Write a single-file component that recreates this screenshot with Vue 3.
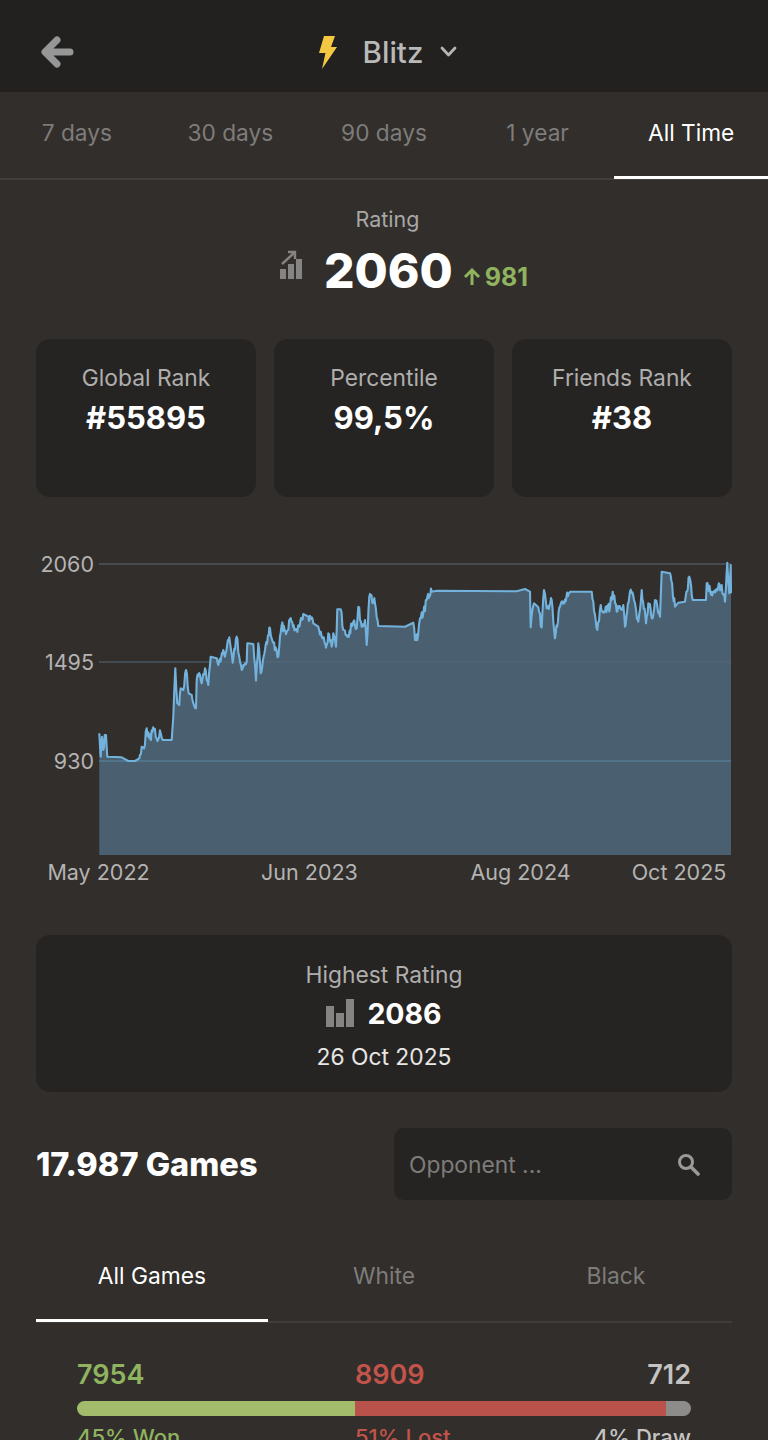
<script setup>
const tabs = ['7 days', '30 days', '90 days', '1 year', 'All Time']
const cards = [
  { label: 'Global Rank', value: '#55895' },
  { label: 'Percentile', value: '99,5%' },
  { label: 'Friends Rank', value: '#38' },
]
const left = [28,550,32,620,36,560,40,600,44,555,48,555,52,620,95,622,115,633,135,633,148,625,155,590,162,595,170,535,178,565,192,540,200,565,212,550,218,570,245,570,250,500,256,355,262,460,268,465,272,415,280,420,288,360,296,430,305,435,318,475,320,390,330,375,335,400,345,355,355,405,362,320,380,325,385,345,400,300,405,320,418,262,428,338,440,260,450,335,458,355,470,335,472,280,490,282,498,392,505,280,512,370,525,300,540,235,548,275,565,320,575,225,590,245,600,208,620,240,640,192,655,200,670,220,685,230,695,260,710,285,715,250,725,290,730,250,738,290,742,178,752,178,760,240,772,260,790,215,800,235,805,170,815,230,825,210,830,285,838,140,855,160,865,228,945,230,970,218,975,270,985,255]
const right = [15,270,22,270,30,205,40,190,50,150,65,125,80,122,320,124,345,117,360,125,362,232,372,160,385,172,395,232,402,120,410,175,425,150,435,265,450,170,480,125,545,125,550,155,562,240,572,165,585,185,600,170,608,125,620,185,640,165,645,230,660,125,672,150,685,215,695,120,708,220,715,160,728,205,735,150,750,200,755,65,780,70,795,170,805,158,825,155,838,80,848,150,888,150,890,100,905,125,935,105,945,155,952,38,958,130,962,45,963,130]
const raw = []
for (let i = 0; i < left.length; i += 2) raw.push([90 + left[i] / 3, 550 + left[i + 1] / 3])
for (let i = 0; i < right.length; i += 2) raw.push([410 + right[i] / 3, 550 + right[i + 1] / 3])

const pts = []
let seed = 7
const noise = () => {
  seed = (seed * 1103515245 + 12345) % 2147483648
  return seed / 2147483648 - 0.5
}
raw.forEach((p, i) => {
  pts.push(p)
  const n = raw[i + 1]
  if (!n) return
  const dx = n[0] - p[0]
  const dy = n[1] - p[1]
  if (Math.abs(dy) < 5 || dx < 0.8) return
  const steps = Math.max(2, Math.floor(dx / 0.7))
  for (let s = 1; s < steps; s++) {
    const t = s / steps
    pts.push([p[0] + dx * t, p[1] + dy * t + noise() * 9])
  }
})
const line = pts.map((p, i) => (i ? 'L' : 'M') + p[0].toFixed(1) + ' ' + p[1].toFixed(1)).join(' ')
const area = line + ' L731 855 L99.3 855 Z'
const yLabels = [{ t: '2060', y: 564 }, { t: '1495', y: 662 }, { t: '930', y: 761 }]
const xLabels = [{ t: 'May 2022', x: 98.5 }, { t: 'Jun 2023', x: 309.5 }, { t: 'Aug 2024', x: 520.5 }, { t: 'Oct 2025', x: 679 }]
const gameTabs = ['All Games', 'White', 'Black']
</script>

<template>
  <div class="page">
    <header class="top">
      <svg class="back" viewBox="0 0 34 34" width="34" height="34">
        <path d="M17 5 L5 17 L17 29 M7 17 H30" fill="none" stroke="#979797" stroke-width="7" stroke-linecap="round" stroke-linejoin="round" />
      </svg>
      <div class="title">
        <svg viewBox="0 0 22 34" width="22" height="34">
          <path d="M8 1 H19 L15 12 H21 L6 34 L9.5 18 H3 Z" fill="#f5c843" />
        </svg>
        <span class="title-text">Blitz</span>
        <svg viewBox="0 0 17 11" width="17" height="11">
          <path d="M2 2 L8.5 9 L15 2" fill="none" stroke="#b5b5b4" stroke-width="2.8" stroke-linecap="round" stroke-linejoin="round" />
        </svg>
      </div>
    </header>

    <nav class="tabs">
      <div v-for="(t, i) in tabs" :key="t" class="tab" :class="{ on: i === 4 }">{{ t }}</div>
    </nav>

    <section class="rating">
      <div class="rating-label">Rating</div>
      <div class="rating-row">
        <svg viewBox="0 0 24 30" width="24" height="30" class="rating-icon">
          <rect x="1" y="19" width="6" height="10" fill="#858483" />
          <rect x="9" y="14" width="6" height="15" fill="#858483" />
          <rect x="17" y="9" width="6" height="20" fill="#858483" />
          <path d="M3 14 L15 3 M9 2 H16 V9" fill="none" stroke="#858483" stroke-width="2.4" />
        </svg>
        <span class="rating-value">2060</span>
        <svg viewBox="0 0 18 18" width="18" height="18" class="delta-arrow">
          <path d="M9 17 V2 M2 9 L9 2 L16 9" fill="none" stroke="#8fb35f" stroke-width="3" />
        </svg>
        <span class="delta">981</span>
      </div>
    </section>

    <section class="cards">
      <div v-for="c in cards" :key="c.label" class="card">
        <div class="card-label">{{ c.label }}</div>
        <div class="card-value">{{ c.value }}</div>
      </div>
    </section>

    <svg class="chart" viewBox="0 540 768 350" width="768" height="350">
      <path :d="area" fill="#4a5f6f" />
      <line x1="99" x2="731" y1="564" y2="564" stroke="#4e5860" stroke-width="1.5" />
      <line x1="99" x2="731" y1="662" y2="662" stroke="#56697a" stroke-width="1.2" />
      <line x1="99" x2="731" y1="761" y2="761" stroke="#5a8aa6" stroke-width="1.2" />
      <path :d="line" fill="none" stroke="#72b2dc" stroke-width="2.1" stroke-linejoin="round" />
      <text v-for="l in yLabels" :key="l.t" x="94" :y="l.y + 8" text-anchor="end" class="axis">{{ l.t }}</text>
      <text v-for="l in xLabels" :key="l.t" :x="l.x" y="880" text-anchor="middle" class="axis">{{ l.t }}</text>
    </svg>

    <section class="highest">
      <div class="highest-label">Highest Rating</div>
      <div class="highest-row">
        <svg viewBox="0 0 28 28" width="28" height="28">
          <rect x="0" y="7" width="8" height="21" fill="#858483" />
          <rect x="10" y="14" width="8" height="14" fill="#858483" />
          <rect x="20" y="0" width="8" height="28" fill="#858483" />
        </svg>
        <span class="highest-value">2086</span>
      </div>
      <div class="highest-date">26 Oct 2025</div>
    </section>

    <section class="games">
      <div class="games-title">17.987 Games</div>
      <div class="search">
        <span class="search-text">Opponent ...</span>
        <svg viewBox="0 0 24 24" width="24" height="24">
          <circle cx="10" cy="10" r="6.5" fill="none" stroke="#9a9998" stroke-width="3" />
          <path d="M15 15 L22 22" stroke="#9a9998" stroke-width="3.6" stroke-linecap="round" />
        </svg>
      </div>
    </section>

    <nav class="game-tabs">
      <div v-for="(t, i) in gameTabs" :key="t" class="game-tab" :class="{ on: i === 0 }">{{ t }}</div>
    </nav>

    <section class="stats">
      <div class="stat-nums">
        <span class="won">7954</span>
        <span class="lost">8909</span>
        <span class="draw">712</span>
      </div>
      <div class="bar">
        <div class="seg seg-won"></div>
        <div class="seg seg-lost"></div>
        <div class="seg seg-draw"></div>
      </div>
      <div class="stat-labels">
        <span class="won">45% Won</span>
        <span class="lost">51% Lost</span>
        <span class="draw">4% Draw</span>
      </div>
    </section>
  </div>
</template>

<style>
html, body { margin: 0; background: #312e2b; }
</style>

<style scoped>
.page {
  width: 768px;
  height: 1440px;
  overflow: hidden;
  background: #312e2b;
  color: #fff;
  font-family: Inter, "Liberation Sans", sans-serif;
}
.top {
  height: 92px;
  background: #222120;
  display: flex;
  align-items: center;
  justify-content: center;
  position: relative;
}
.back { position: absolute; left: 40px; top: 35px; }
.title { display: flex; align-items: center; margin-left: 5px; margin-top: 11px; }
.title-text { font-size: 29.5px; font-weight: 500; color: #b9b9b8; margin: 0 17px 0 25px; }
.tabs {
  height: 88px;
  box-sizing: border-box;
  display: grid;
  grid-template-columns: repeat(5, 1fr);
  border-bottom: 2px solid #423f3d;
}
.tab {
  display: flex;
  align-items: center;
  justify-content: center;
  padding-bottom: 7px;
  font-size: 22.7px;
  color: #7e7c7a;
  height: 88px;
  box-sizing: border-box;
}
.tab.on { color: #fff; border-bottom: 3px solid #fff; height: 87px; padding-bottom: 3px; }
.rating { padding-top: 27px; text-align: center; height: 159px; box-sizing: border-box; }
.rating-label { font-size: 21.5px; line-height: 24px; color: #a8a7a6; padding-left: 7px; }
.rating-row { display: flex; align-items: center; justify-content: center; height: 54px; margin-top: 13px; padding-left: 39px; }
.rating-icon { margin-right: 21px; margin-top: -12px; }
.rating-value { font-size: 48px; font-weight: 800; line-height: 54px; }
.delta-arrow { margin-left: 10px; margin-top: 12px; }
.delta { font-size: 25px; font-weight: 700; color: #8fb35f; margin-left: 4px; margin-top: 12px; }
.cards {
  display: grid;
  grid-template-columns: repeat(3, 220px);
  gap: 18px;
  padding: 0 36px;
}
.card { height: 158px; background: #262422; border-radius: 14px; text-align: center; padding-top: 25px; box-sizing: border-box; }
.card-label { font-size: 22.8px; line-height: 27px; color: #afaead; }
.card-value { font-size: 31px; font-weight: 700; line-height: 36px; margin-top: 9px; }
.chart { display: block; margin-top: 43px; }
.axis { font-size: 21.5px; fill: #b4b3b2; font-family: Inter, "Liberation Sans", sans-serif; }
.highest {
  margin: 45px 36px 0;
  height: 157px;
  box-sizing: border-box;
  background: #262422;
  border-radius: 14px;
  text-align: center;
  padding-top: 26px;
}
.highest-label { font-size: 22.8px; line-height: 27px; color: #afaead; }
.highest-row { display: flex; align-items: center; justify-content: center; gap: 13px; margin-top: 7px; height: 36px; }
.highest-value { font-size: 28.5px; font-weight: 700; }
.highest-date { font-size: 22.8px; line-height: 27px; color: #e6e6e5; margin-top: 12px; }
.games {
  display: flex;
  justify-content: space-between;
  align-items: center;
  margin: 36px 36px 0;
  height: 72px;
}
.games-title { font-size: 32.5px; font-weight: 800; }
.search {
  width: 338px;
  height: 72px;
  box-sizing: border-box;
  background: #262422;
  border-radius: 10px;
  display: flex;
  align-items: center;
  justify-content: space-between;
  padding: 0 32px 0 15px;
}
.search-text { font-size: 22.8px; color: #7e7c7a; }
.game-tabs {
  margin: 41px 36px 0;
  height: 82px;
  box-sizing: border-box;
  display: grid;
  grid-template-columns: repeat(3, 1fr);
  border-bottom: 2px solid #3f3c3a;
}
.game-tab {
  display: flex;
  align-items: center;
  justify-content: center;
  font-size: 22.8px;
  color: #7e7c7a;
  height: 82px;
  box-sizing: border-box;
  padding-bottom: 13px;
}
.game-tab.on { color: #fff; border-bottom: 3px solid #fff; height: 81px; padding-bottom: 9px; }
.stats { padding: 35px 77px 0; }
.stat-nums, .stat-labels { display: grid; grid-template-columns: 278px 1fr auto; }
.stat-nums { font-size: 27px; font-weight: 600; line-height: 33px; }
.stat-labels { font-size: 22px; font-weight: 500; line-height: 27px; margin-top: 8px; }
.won { color: #8fb35f; }
.lost { color: #c2534a; }
.draw { color: #c4c3c2; }
.bar { display: flex; height: 15px; margin-top: 10px; border-radius: 8px; overflow: hidden; }
.seg-won { width: 278px; background: #a3bc6c; }
.seg-lost { width: 311px; background: #b9524a; }
.seg-draw { flex: 1; background: #8d8c8b; }
</style>
